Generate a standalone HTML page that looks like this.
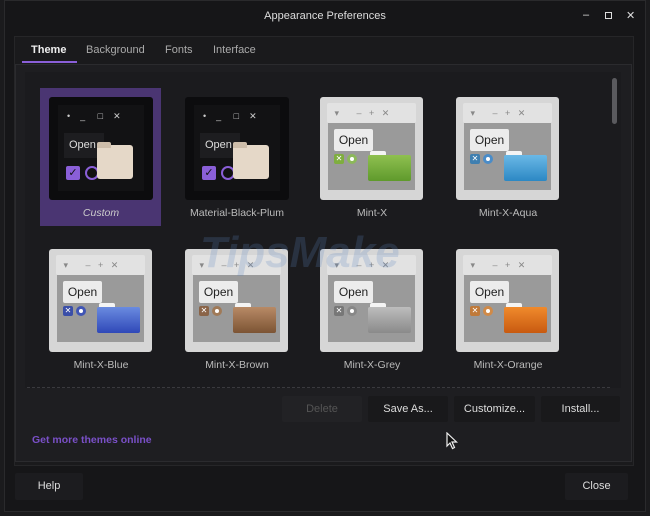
<!DOCTYPE html>
<html><head><style>
*{margin:0;padding:0;box-sizing:border-box}
body{width:650px;height:516px;background:#1b1b1d;font-family:"Liberation Sans",sans-serif;overflow:hidden;position:relative;color:#ddd}
.abs{position:absolute}
.win{left:4px;top:0;width:642px;height:512px;background:#161618;border:1px solid #2a2a2c}
.title{left:0;top:0;width:650px;height:32px;text-align:center;line-height:32px;font-size:11px;color:#ddd}
.ctl{top:9px;font-size:11px;color:#ddd}
.panel{left:15px;top:64px;width:617px;height:398px;background:#1e1e21;border:1px solid #2b2b2e}
.tab{top:44px;font-size:11px;color:#aaa}
.scroll{left:25px;top:72px;width:596px;height:316px;background:#1b1b1e}
.dash{left:27px;top:387px;width:583px;border-top:1px dashed #3a3a3e}
.lbl{font-size:10.5px;color:#bbb;text-align:center;width:140px}
.mt{width:103px;height:103px;background:#d6d6d6;border-radius:3px}
.mt .tb{position:absolute;left:7px;top:6px;width:89px;height:20px;background:#e2e2e2;border-radius:2px;font-size:9px;color:#888;line-height:20px}
.mt .bd{position:absolute;left:8px;top:26px;width:87px;height:67px;background:#9a9a9a}
.mt .op{position:absolute;left:14px;top:32px;width:39px;height:22px;background:#ececec;border-radius:2px;font-size:12px;color:#222;text-align:center;line-height:22px}
.mt .cb{position:absolute;left:14px;top:57px;width:10px;height:10px;border-radius:2px;font-size:8px;color:#fff;text-align:center;line-height:10px}
.mt .rd{position:absolute;left:27px;top:57px;width:10px;height:10px;border-radius:50%}
.mt .rd::after{content:"";position:absolute;left:3px;top:3px;width:4px;height:4px;border-radius:50%;background:#fff}
.mt .fd{position:absolute;left:48px;top:58px;width:43px;height:26px;border-radius:2px}
.mt .ft{position:absolute;left:50px;top:54px;width:16px;height:6px;background:#f4f4f4;border-radius:2px 2px 0 0}
.dk{width:104px;height:103px;background:#0c0c0e;border-radius:3px}
.dk .in{position:absolute;left:9px;top:8px;width:86px;height:86px;background:#121214}
.btn{top:396px;height:26px;background:#19191b;font-size:11px;color:#ddd;text-align:center;line-height:26px;border-radius:2px}
</style></head><body>
<div class="abs win"></div>
<div class="abs title">Appearance Preferences</div>
<div class="abs ctl" style="left:583px">–</div>
<div class="abs ctl" style="left:605px;width:7px;height:7px;border:1px solid #ddd;top:12px"></div>
<div class="abs ctl" style="left:626px">✕</div>
<div class="abs" style="left:14px;top:36px;width:620px;height:430px;background:#1a1a1c;border:1px solid #262628"></div>
<div class="abs tab" style="left:31px;color:#eee;font-weight:bold">Theme</div>
<div class="abs tab" style="left:86px">Background</div>
<div class="abs tab" style="left:165px">Fonts</div>
<div class="abs tab" style="left:213px">Interface</div>
<div class="abs" style="left:22px;top:61px;width:55px;height:2px;background:#8a5fd8"></div>
<div class="abs panel"></div>
<div class="abs scroll"></div>
<div class="abs" style="left:612px;top:78px;width:5px;height:46px;background:#5a5a5e;border-radius:3px"></div>
<div class="abs dash"></div>

<!-- row 1 -->
<div class="abs" style="left:40px;top:88px;width:121px;height:138px;background:#4a3572"></div>
<div class="abs dk" style="left:49px;top:97px"><div class="in"></div>
<div class="abs" style="left:18px;top:14px;font-size:9px;color:#ccc;letter-spacing:0">•&nbsp;&nbsp;&nbsp;&nbsp;_&nbsp;&nbsp;&nbsp;&nbsp;&nbsp;□&nbsp;&nbsp;&nbsp;&nbsp;✕</div>
<div class="abs" style="left:15px;top:36px;width:40px;height:25px;background:#1d1d20;font-size:11px;color:#ddd;line-height:25px;padding-left:5px">Open</div>
<div class="abs" style="left:17px;top:69px;width:14px;height:14px;background:#8a5fd8;border-radius:2px;color:#111;font-size:11px;line-height:14px;text-align:center">✓</div>
<div class="abs" style="left:36px;top:69px;width:14px;height:14px;border:2px solid #8a5fd8;border-radius:50%;background:#111"></div>
<div class="abs" style="left:48px;top:48px;width:36px;height:34px;background:#e5d8c8;border-radius:3px"></div>
<div class="abs" style="left:48px;top:45px;width:14px;height:6px;background:#cdbdaa;border-radius:2px 2px 0 0"></div>
</div>
<div class="abs lbl" style="left:31px;top:207px;font-style:italic;color:#ccc">Custom</div>

<div class="abs dk" style="left:185px;top:97px"><div class="in"></div>
<div class="abs" style="left:18px;top:14px;font-size:9px;color:#ccc">•&nbsp;&nbsp;&nbsp;&nbsp;_&nbsp;&nbsp;&nbsp;&nbsp;&nbsp;□&nbsp;&nbsp;&nbsp;&nbsp;✕</div>
<div class="abs" style="left:15px;top:36px;width:40px;height:25px;background:#1d1d20;font-size:11px;color:#ddd;line-height:25px;padding-left:5px">Open</div>
<div class="abs" style="left:17px;top:69px;width:14px;height:14px;background:#8a5fd8;border-radius:2px;color:#111;font-size:11px;line-height:14px;text-align:center">✓</div>
<div class="abs" style="left:36px;top:69px;width:14px;height:14px;border:2px solid #8a5fd8;border-radius:50%;background:#111"></div>
<div class="abs" style="left:48px;top:48px;width:36px;height:34px;background:#e5d8c8;border-radius:3px"></div>
<div class="abs" style="left:48px;top:45px;width:14px;height:6px;background:#cdbdaa;border-radius:2px 2px 0 0"></div>
</div>
<div class="abs lbl" style="left:167px;top:207px">Material-Black-Plum</div>

<div class="abs mt" style="left:320px;top:97px"><div class="tb">&nbsp;&nbsp;&nbsp;▾&nbsp;&nbsp;&nbsp;&nbsp;&nbsp;&nbsp;&nbsp;–&nbsp;&nbsp;&nbsp;+&nbsp;&nbsp;&nbsp;✕</div><div class="bd"></div><div class="op">Open</div><div class="cb" style="background:#7fae3f">✕</div><div class="rd" style="background:#8cb85a"></div><div class="ft"></div><div class="fd" style="background:linear-gradient(#8fc050,#5f9a2c)"></div></div>
<div class="abs lbl" style="left:302px;top:207px">Mint-X</div>

<div class="abs mt" style="left:456px;top:97px"><div class="tb">&nbsp;&nbsp;&nbsp;▾&nbsp;&nbsp;&nbsp;&nbsp;&nbsp;&nbsp;&nbsp;–&nbsp;&nbsp;&nbsp;+&nbsp;&nbsp;&nbsp;✕</div><div class="bd"></div><div class="op">Open</div><div class="cb" style="background:#3f7fb0">✕</div><div class="rd" style="background:#4a8cc8"></div><div class="ft"></div><div class="fd" style="background:linear-gradient(#6ab8e6,#2c88c4)"></div></div>
<div class="abs lbl" style="left:438px;top:207px">Mint-X-Aqua</div>

<!-- row 2 -->
<div class="abs mt" style="left:49px;top:249px"><div class="tb">&nbsp;&nbsp;&nbsp;▾&nbsp;&nbsp;&nbsp;&nbsp;&nbsp;&nbsp;&nbsp;–&nbsp;&nbsp;&nbsp;+&nbsp;&nbsp;&nbsp;✕</div><div class="bd"></div><div class="op">Open</div><div class="cb" style="background:#3a4ea8">✕</div><div class="rd" style="background:#4055b5"></div><div class="ft"></div><div class="fd" style="background:linear-gradient(#6a8be0,#2f48b8)"></div></div>
<div class="abs lbl" style="left:31px;top:359px">Mint-X-Blue</div>

<div class="abs mt" style="left:185px;top:249px"><div class="tb">&nbsp;&nbsp;&nbsp;▾&nbsp;&nbsp;&nbsp;&nbsp;&nbsp;&nbsp;&nbsp;–&nbsp;&nbsp;&nbsp;+&nbsp;&nbsp;&nbsp;✕</div><div class="bd"></div><div class="op">Open</div><div class="cb" style="background:#8a6448">✕</div><div class="rd" style="background:#a07a58"></div><div class="ft"></div><div class="fd" style="background:linear-gradient(#b88a66,#7c5434)"></div></div>
<div class="abs lbl" style="left:167px;top:359px">Mint-X-Brown</div>

<div class="abs mt" style="left:320px;top:249px"><div class="tb">&nbsp;&nbsp;&nbsp;▾&nbsp;&nbsp;&nbsp;&nbsp;&nbsp;&nbsp;&nbsp;–&nbsp;&nbsp;&nbsp;+&nbsp;&nbsp;&nbsp;✕</div><div class="bd"></div><div class="op">Open</div><div class="cb" style="background:#777">✕</div><div class="rd" style="background:#888"></div><div class="ft"></div><div class="fd" style="background:linear-gradient(#bdbdbd,#8a8a8a)"></div></div>
<div class="abs lbl" style="left:302px;top:359px">Mint-X-Grey</div>

<div class="abs mt" style="left:456px;top:249px"><div class="tb">&nbsp;&nbsp;&nbsp;▾&nbsp;&nbsp;&nbsp;&nbsp;&nbsp;&nbsp;&nbsp;–&nbsp;&nbsp;&nbsp;+&nbsp;&nbsp;&nbsp;✕</div><div class="bd"></div><div class="op">Open</div><div class="cb" style="background:#c07a3a">✕</div><div class="rd" style="background:#d08a48"></div><div class="ft"></div><div class="fd" style="background:linear-gradient(#f08a2c,#c85a10)"></div></div>
<div class="abs lbl" style="left:438px;top:359px">Mint-X-Orange</div>

<div class="abs" style="left:200px;top:228px;font-size:44px;font-weight:bold;font-style:italic;color:rgba(90,130,190,0.22)">TipsMake</div>

<div class="abs btn" style="left:282px;width:80px;background:#222225;color:#555">Delete</div>
<div class="abs btn" style="left:368px;width:80px">Save As...</div>
<div class="abs btn" style="left:454px;width:81px">Customize...</div>
<div class="abs btn" style="left:541px;width:79px">Install...</div>
<div class="abs" style="left:32px;top:434px;font-size:10.5px;font-weight:bold;color:#7a50c8">Get more themes online</div>
<svg class="abs" style="left:446px;top:432px" width="12" height="18" viewBox="0 0 12 18"><path d="M1 1 L1 14 L4 11 L6.5 16.5 L8.5 15.5 L6 10 L10.5 10 Z" fill="#111" stroke="#eee" stroke-width="1.2"/></svg>

<div class="abs btn" style="left:15px;top:473px;width:68px;height:27px;background:#1c1c1f">Help</div>
<div class="abs btn" style="left:565px;top:473px;width:63px;height:27px;background:#1c1c1f">Close</div>
</body></html>
